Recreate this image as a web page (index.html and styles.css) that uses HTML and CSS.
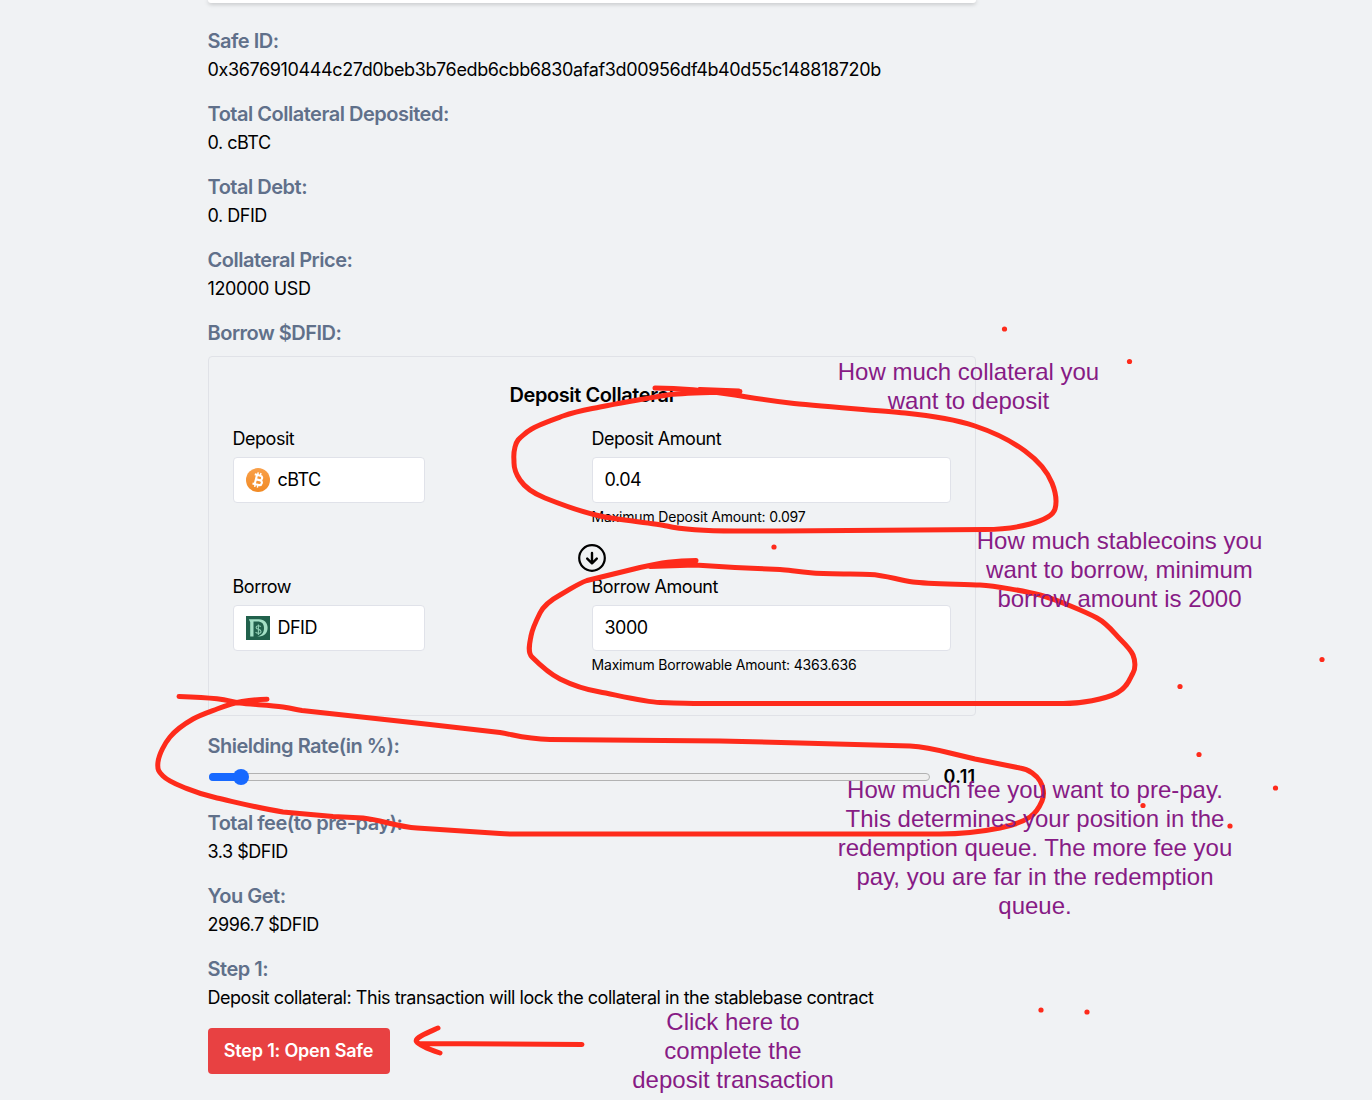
FILE: index.html
```html
<!DOCTYPE html>
<html lang="en">
<head>
<meta charset="utf-8">
<title>Open Safe</title>
<link rel="stylesheet" href="styles.css">
</head>
<body>
<div class="page">
  <main class="content">
    <div class="top-card"></div>

    <section class="field"><h3 class="label">Safe ID:</h3><p class="value hash">0x3676910444c27d0beb3b76edb6cbb6830afaf3d00956df4b40d55c148818720b</p></section>
    <section class="field"><h3 class="label">Total Collateral Deposited:</h3><p class="value">0. cBTC</p></section>
    <section class="field"><h3 class="label">Total Debt:</h3><p class="value">0. DFID</p></section>
    <section class="field"><h3 class="label">Collateral Price:</h3><p class="value number">120000 USD</p></section>

    <h3 class="label">Borrow $DFID:</h3>
    <section class="panel">
      <h2 class="panel-title">Deposit Collateral</h2>
      <div class="row">
        <div class="cell">
          <span class="caption">Deposit</span>
          <div class="box token">
            <svg width="24" height="24" viewBox="0 0 24 24">
              <defs><linearGradient id="coin" x1="0" y1="0" x2="0" y2="1"><stop offset="0" stop-color="#f9a04a"/><stop offset="1" stop-color="#f18a24"/></linearGradient></defs>
              <circle cx="12" cy="12" r="12" fill="url(#coin)"/>
              <g transform="rotate(14 12 12)" fill="none" stroke="#fff">
                <path d="M7.500 7.300h5.800a2.200 2.200 0 0 1 0 4.500H10h4a2.400 2.400 0 0 1 0 4.900H7.500M9.800 7.300v9.400" stroke-width="2.100"/>
                <path d="M10.400 4.500v2.500M13.200 4.500v2.500M10.400 17v2.500M13.200 17v2.500" stroke-width="1.500"/>
              </g>
            </svg>
            <span>cBTC</span>
          </div>
        </div>
        <div class="cell">
          <span class="caption">Deposit Amount</span>
          <div class="box">0.04</div>
          <small class="limit">Maximum Deposit Amount: 0.097</small>
        </div>
      </div>
      <div class="swap">
        <svg width="28" height="28" viewBox="0 0 28 28" fill="none" stroke="#000">
          <circle cx="14" cy="14" r="12.8" stroke-width="2.2"/>
          <path d="M14 9v10.2M9.2 14.6l4.8 4.8 4.8-4.8" stroke-width="2.400" stroke-linecap="round" stroke-linejoin="round"/>
        </svg>
      </div>
      <div class="row">
        <div class="cell">
          <span class="caption">Borrow</span>
          <div class="box token">
            <svg width="24" height="24" viewBox="0 0 24 24">
              <rect width="24" height="24" fill="#21614c"/>
              <path d="M2.800 3.200H13c5.500 0 8.600 3.700 8.600 8.600s-3.200 8.700-8.600 8.700H11c4.500-.6 7-3.700 7-8.500 0-4.600-2.500-6.600-6.500-6.600H7.500V20.500H4.200V6z" fill="#a4e0c6"/>
              <path d="M14.800 10.600c-1-1.200-4.700-1.400-4.700.8 0 2.400 4.900 1.300 4.900 4 0 2.500-4.200 2.300-5.400.7M12.400 8.500v10.500" fill="none" stroke="#8fcdb3" stroke-width="1.100"/>
            </svg>
            <span>DFID</span>
          </div>
        </div>
        <div class="cell">
          <span class="caption">Borrow Amount</span>
          <div class="box">3000</div>
          <small class="limit">Maximum Borrowable Amount: 4363.636</small>
        </div>
      </div>
    </section>

    <section class="rate">
      <h3 class="label">Shielding Rate(in %):</h3>
      <div class="slider">
        <div class="track"><div class="fill"></div><div class="thumb"></div></div>
        <strong class="rate-value">0.11</strong>
      </div>
    </section>
    <section class="field"><h3 class="label">Total fee(to pre-pay):</h3><p class="value">3.3 $DFID</p></section>
    <section class="field"><h3 class="label">You Get:</h3><p class="value">2996.7 $DFID</p></section>
    <section class="field"><h3 class="label">Step 1:</h3><p class="value">Deposit collateral: This transaction will lock the collateral in the stablebase contract</p></section>
    <button class="submit">Step 1: Open Safe</button>
  </main>

  <svg class="ink" width="1372" height="1100" viewBox="0 0 1372 1100">
    <g class="strokes">
      <path d="M655 388C680 388 710 391 735 395S765 400 790 403S875 410 905 413S957 420 975 426S1010 440 1025 451S1048 473 1052 483S1057 502 1055 509S1041 521 1030 524S1000 529.500 985 529.500L780 531H735C705 531 680 529 667 526S618 520 600 516S560 504 545 498S524 486 520 480S514 470 514 463S513 455 515 447S520 438 527 432S549 421 563 416S585 410 600 407S655 397 667 395S700 393 740 391.500M700 389.500L739 391"/>
      <path d="M696 560.500C675 560.500 661 563 640 567.500L587 580.500C577 584 571 589 560 595S543 607 540 613S532 630 531 636S527 652 532 657S548 673 560 679S588 690 600 692S645 702 660 702.500S690 703.500 700 703.500H1060C1080 704 1106 699 1117 693S1130 678 1133 673S1135 660 1133 655S1126 645 1120 639S1108 624 1097 618S1055 599 1040 595S995 586 980 585S928 584 913 582S885 575 870 574.500S830 574 813 573S790 570 780 569.500S745 568 735 567.500L695 565L650 566.500L695 562"/>
      <path d="M179 696.500C193 697 205 697.500 217 698.800S230 701.500 240 703S270 705 283 707S292 709 302 710.500L380 719L430 724.500L500 732.500C515 735 525 739 550 739.500L720 741L800 743L910 746C925 747 938 750 950 753L975 759L1020 768C1029 769 1037 776 1040 781S1045 794 1042 801S1036 813 1030 817S1015 825 1000 828S960 834 940 834H550C530 834 514 834.500 500 833.500L417 828C397 827 382 820 363 818L333 816.500L283 812C258 808 235 802 217 798S193 791 183 787S167 780 163 776S157 770 158 762S165 743 170 737S186 723 193 719S209 712 217 709S233 703 242 701.500S257 699.500 267 699.300"/>
      <path d="M438 1028C429 1032 414 1038 416.500 1041.500S431 1050 440 1053M419 1043.500L582 1044.500"/>
    </g>
    <g class="dots">
      <circle cx="1004.500" cy="329" r="2.600"/><circle cx="1129.500" cy="361.500" r="2.600"/><circle cx="774" cy="547" r="2.600"/>
      <circle cx="1322" cy="659.500" r="2.600"/><circle cx="1180" cy="686.500" r="2.600"/><circle cx="1199" cy="754.500" r="2.600"/>
      <circle cx="1275.500" cy="788" r="2.600"/><circle cx="1143" cy="805.500" r="2.600"/><circle cx="1230" cy="826" r="2.600"/>
      <circle cx="1041" cy="1010" r="2.600"/><circle cx="1087" cy="1012" r="2.600"/>
    </g>
  </svg>

  <p class="note note-deposit">How much collateral you<br>want to deposit</p>
  <p class="note note-borrow">How much stablecoins you<br>want to borrow, minimum<br>borrow amount is 2000</p>
  <p class="note note-fee">How much fee you want to pre-pay.<br>This determines your position in the<br>redemption queue. The more fee you<br>pay, you are far in the redemption<br>queue.</p>
  <p class="note note-submit">Click here to<br>complete the<br>deposit transaction</p>
</div>
</body>
</html>
```

FILE: styles.css
```css
* { box-sizing: border-box; }
body, h2, h3, p { margin: 0; }
body {
  background: #f0f2f4;
  color: #000;
  font: 400 18px/27px Inter, sans-serif;
  letter-spacing: -0.47px;
}
.page { position: relative; width: 1372px; height: 1100px; overflow: hidden; }
.content { width: 768px; margin-left: 207.5px; }
.top-card {
  height: 3px;
  margin-bottom: 23px;
  background: #fff;
  border-radius: 0 0 6px 6px;
  box-shadow: 0 1px 4px rgba(0, 0, 0, 0.25);
}
.field { margin-bottom: 16px; }
.label { color: #60708a; font-size: 20px; font-weight: 600; line-height: 30px; letter-spacing: -0.49px; }
.value { white-space: nowrap; }
.hash { letter-spacing: -0.375px; }
.number { letter-spacing: -0.36px; }

.panel {
  height: 360px;
  margin: 8px 0 15px;
  padding: 24px;
  border: 1px solid #e0e2e7;
  border-radius: 4px;
}
.panel-title {
  margin-bottom: 16px;
  text-align: center;
  font-size: 20px;
  font-weight: 600;
  line-height: 28px;
  letter-spacing: -0.4px;
}
.row { display: grid; grid-template-columns: 1fr 1fr; }
.cell { display: flex; flex-direction: column; }
.caption { line-height: 28px; margin-bottom: 4px; }
.box {
  display: flex;
  align-items: center;
  gap: 8px;
  height: 46px;
  padding: 0 12px 1px;
  background: #fff;
  border: 1px solid #e0e2e9;
  border-radius: 4px;
  letter-spacing: -0.5px;
}
.token { width: 192px; padding-bottom: 0; }
.token span { margin-top: -1px; }
.limit { margin-top: 4px; font-size: 14px; line-height: 20px; letter-spacing: -0.19px; }
.swap { display: flex; justify-content: center; margin: 17px 0 1px; }
.swap svg { display: block; }

.rate { margin-bottom: 16px; }
.slider { display: flex; align-items: center; height: 31px; }
.track {
  position: relative;
  width: 721px;
  height: 8px;
  margin-left: 1px;
  background: #efefef;
  border: 1px solid #b2b2b2;
  border-radius: 4px;
}
.fill { width: 32px; height: 8px; margin: -1px; background: #1769ff; border-radius: 4px; }
.thumb {
  position: absolute;
  top: -5px;
  left: 23px;
  width: 16px;
  height: 16px;
  background: #1769ff;
  border-radius: 50%;
}
.rate-value { margin-left: auto; font-weight: 600; letter-spacing: 0.3px; }

.submit {
  display: block;
  width: 182px;
  height: 46px;
  margin-top: 17px;
  padding: 0;
  border: 0;
  border-radius: 4px;
  background: #e84142;
  color: #fff;
  font: 600 18px/46px Inter, sans-serif;
  letter-spacing: -0.2px;
}

.ink { position: absolute; left: 0; top: 0; pointer-events: none; }
.strokes { fill: none; stroke: #fe2b1b; stroke-width: 5; stroke-linecap: round; stroke-linejoin: round; }
.dots { fill: #fe2b1b; }
.note {
  position: absolute;
  transform: translateX(-50%);
  color: #871b85;
  font: 400 24px/29px "Liberation Sans", sans-serif;
  letter-spacing: 0;
  text-align: center;
  white-space: nowrap;
}
.note-deposit { left: 968.5px; top: 357px; }
.note-borrow { left: 1119.5px; top: 526px; }
.note-fee { left: 1035px; top: 775px; }
.note-submit { left: 733px; top: 1007px; }
```
